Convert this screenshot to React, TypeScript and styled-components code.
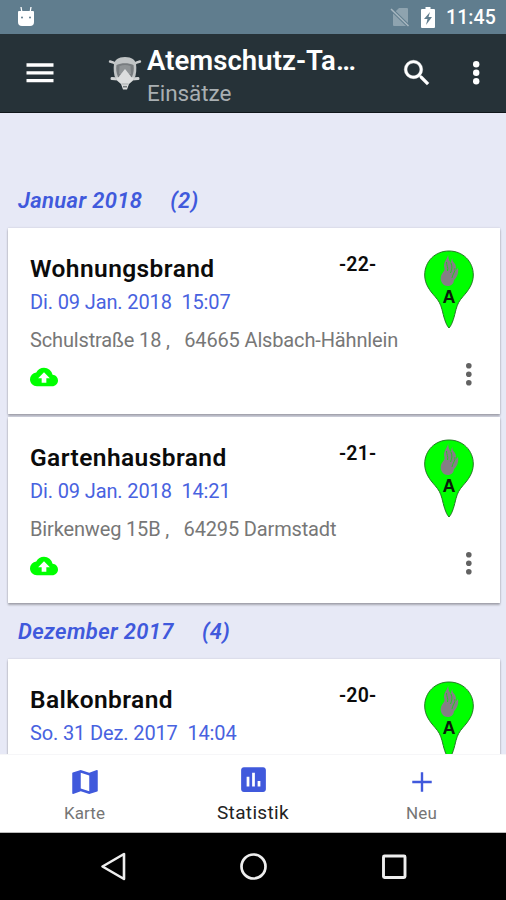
import React from "react";
import styled, { createGlobalStyle } from "styled-components";

const GlobalStyle = createGlobalStyle`
  * { box-sizing: border-box; }
  body { margin: 0; background: #000; font-family: Roboto, "Liberation Sans", sans-serif; }
  svg { display: block; flex: none; }
`;

const Screen = styled.div`
  width: 506px;
  height: 900px;
  display: flex;
  flex-direction: column;
  overflow: hidden;
`;

const StatusBar = styled.header`
  height: 34px;
  flex: none;
  display: flex;
  align-items: center;
  padding: 0 11px 0 17px;
  background: #607d8e;
  color: #fff;
`;

const StatusIcons = styled.div`
  margin-left: auto;
  display: flex;
  align-items: center;
  gap: 11px;
`;

const Clock = styled.span`
  width: 49px;
  font-size: 19.5px;
  font-weight: 500;
  line-height: 24px;
  letter-spacing: 0.1px;
  white-space: nowrap;
  padding-top: 2px;
`;

const AppBar = styled.div`
  height: 79px;
  flex: none;
  display: flex;
  align-items: flex-start;
  background: #263238;
  border-bottom: 1px solid #10171b;
  color: #fff;
  padding: 0 26px 0 24px;
`;

const MenuIcon = styled.svg`
  margin: 28px 55px 0 2px;
`;

const MaskIcon = styled.svg`
  margin: 20px 5px 0 -1px;
`;

const Titles = styled.div`
  width: 212px;
  padding-top: 11px;
`;

const Title = styled.h1`
  margin: 0;
  font-size: 27.5px;
  font-weight: 600;
  line-height: 32px;
  letter-spacing: 0.05px;
  white-space: nowrap;
`;

const Subtitle = styled.div`
  font-size: 22.5px;
  line-height: 33px;
  letter-spacing: -0.05px;
  color: #a9afb2;
`;

const BarActions = styled.div`
  display: flex;
  align-items: center;
  margin: 22px 0 0 auto;
  gap: 39.5px;
`;

const List = styled.main`
  flex: 1;
  min-height: 0;
  overflow: hidden;
  padding: 59px 6px 0 8px;
  background: #e7e9f6;
`;

const MonthHeader = styled.h2`
  margin: 0;
  height: 56px;
  padding: 17px 0 0 10px;
  display: flex;
  gap: 28px;
  font-size: 22px;
  line-height: 24px;
  font-weight: 600;
  font-style: italic;
  letter-spacing: 0.35px;
  color: #4059dc;
`;

const Card = styled.article`
  height: 186px;
  margin-bottom: 3px;
  display: flex;
  justify-content: space-between;
  padding: 0 22px;
  background: #fff;
  box-shadow: 0 2px 2px rgba(0, 0, 0, 0.28), 0 0 2px rgba(0, 0, 0, 0.14);
`;

const CardGroup = styled.section`
  & > article:last-child { margin-bottom: 0; }
`;

const Details = styled.div`
  width: 300px;
  padding-top: 27px;
  white-space: pre;
`;

const Name = styled.h3`
  margin: 0 0 7px;
  font-size: 24.5px;
  font-weight: 600;
  line-height: 28px;
  letter-spacing: 0.42px;
  color: #0b0b0b;
`;

const DateLine = styled.div`
  margin-bottom: 14px;
  font-size: 20px;
  line-height: 24px;
  letter-spacing: -0.13px;
  color: #4862e0;
`;

const Address = styled.div`
  margin-bottom: 11px;
  font-size: 20px;
  line-height: 24px;
  letter-spacing: -0.15px;
  color: #777;
`;

const EntryNumber = styled.div`
  width: 60px;
  margin-left: -16px;
  padding-top: 25px;
  font-size: 19.5px;
  font-weight: 600;
  line-height: 24px;
  letter-spacing: 0.2px;
  color: #0b0b0b;
`;

const Side = styled.div`
  width: 54px;
  padding-top: 22px;
  display: flex;
  flex-direction: column;
`;

const RowMore = styled.svg`
  margin: 34px 0 0 42px;
`;

const BottomNav = styled.nav`
  height: 79px;
  flex: none;
  display: grid;
  grid-template-columns: 169px 168px 169px;
  background: #fff;
  border-top: 1px solid #f6f6f8;
  border-bottom: 1px solid #bbb;
`;

const NavItem = styled.div<{ $active?: boolean }>`
  display: flex;
  flex-direction: column;
  align-items: center;
  padding-top: ${(p) => (p.$active ? 8 : 11)}px;
  gap: ${(p) => (p.$active ? 6 : 4)}px;
  font-size: ${(p) => (p.$active ? 19 : 17)}px;
  line-height: 22px;
  letter-spacing: ${(p) => (p.$active ? 0.35 : 0.1)}px;
  color: ${(p) => (p.$active ? "#222" : "#757575")};
`;

const SystemNav = styled.footer`
  height: 67px;
  flex: none;
  display: flex;
  justify-content: center;
  gap: 112px;
  padding: 19px 0 0 1px;
  background: #000;
`;

const Dots = ({ r, gap, color }: { r: number; gap: number; color: string }) => (
  <>
    {[0, 1, 2].map((i) => (
      <circle key={i} cx={r} cy={r + i * gap} r={r} fill={color} />
    ))}
  </>
);

const Mask = () => (
  <MaskIcon width="34" height="38" viewBox="0 0 34 38">
    <path d="M2 7.500l3.500 1L9 11M32 7.500l-3.500 1L25 11" stroke="#c8cbcc" strokeWidth="2.400" fill="none" strokeLinecap="round" />
    <path d="M4 24.500l6 .5M30 24.500l-6 .5" stroke="#d0d3d4" strokeWidth="3" fill="none" strokeLinecap="round" />
    <path d="M17 3C10 3 6.800 6 6 10c-.7 5-.3 10 1.500 15l5 3h9l5-3c1.800-5 2.200-10 1.500-15C27.200 6 24 3 17 3z" fill="#c0c4c5" />
    <path d="M8.500 11c5-2.500 12-2.500 17 0 .7 4 .2 8-1.500 12H10c-1.700-4-2.200-8-1.500-12z" fill="#777c7f" />
    <path d="M11.500 12c4-1.200 7-1.200 11 0l.5 8H11z" fill="#8f9496" />
    <path d="M17 15l6 7.500V26H11v-3.500z" fill="#dcdede" />
    <path d="M8 23.500h18l-1.500 3.500L21 30l-2 5.500h-4L13 30l-3.500-3z" fill="#dcdede" />
    <path d="M13.500 30h7" stroke="#a4a8aa" strokeWidth="1" fill="none" />
    <path d="M15 32.700h4" stroke="#747a7d" strokeWidth="1.600" />
  </MaskIcon>
);

const Pin = () => (
  <svg width="50" height="79" viewBox="0 0 50 79">
    <path
      d="M25 1C11 1 .7 11.500.7 25c0 9 5 15.500 10.300 21.500C15 51 16.500 54 18 59.500c1.500 6 3.500 15 7 18.500 3.500-3.500 5.500-12.500 7-18.500C33.500 54 35 51 39 46.500 44.300 40.500 49.300 34 49.300 25 49.300 11.500 39 1 25 1z"
      fill="#00ff00"
      stroke="#267826"
      strokeWidth="1"
    />
    <path
      d="M24.300 4c-.8 4.500-4 7-4.300 11.500-.1 1.500 1 3 .3 5-1.500 2.500-3.600 4-3.600 7.500 0 4.500 3 8 7 8 4 0 6-2.500 6.300-6 3-2.500 5.300-8 3.800-12.500-.3 1.500-1 2-1.800 2.300.3-4-.6-6-3-8.300-.7-1.300-.7-2-.3-3.500-1.700 1.800-2 3.500-1.200 6-2.200-3-3.600-5.500-3.200-10z"
      fill="#857f85"
    />
    <path d="M22.500 12c0 4 2 5 1 9M27 13c1.500 4 1 6-.5 10M31 18c.5 4-2.500 6-3 10" stroke="#20cc20" strokeWidth="1" fill="none" />
    <text x="25" y="53" textAnchor="middle" fontFamily="Liberation Sans, sans-serif" fontWeight="700" fontSize="18" fill="#0a1c0a">
      A
    </text>
  </svg>
);

interface Entry {
  name: string;
  date: string;
  address: string;
  number: number;
}

const months: { label: string; count: number; entries: Entry[] }[] = [
  {
    label: "Januar 2018",
    count: 2,
    entries: [
      { name: "Wohnungsbrand", date: "Di. 09 Jan. 2018  15:07", address: "Schulstraße 18 ,   64665 Alsbach-Hähnlein", number: 22 },
      { name: "Gartenhausbrand", date: "Di. 09 Jan. 2018  14:21", address: "Birkenweg 15B ,   64295 Darmstadt", number: 21 },
    ],
  },
  {
    label: "Dezember 2017",
    count: 4,
    entries: [{ name: "Balkonbrand", date: "So. 31 Dez. 2017  14:04", address: "", number: 20 }],
  },
];

const EntryCard = ({ entry }: { entry: Entry }) => (
  <Card>
    <Details>
      <Name>{entry.name}</Name>
      <DateLine>{entry.date}</DateLine>
      <Address>{entry.address}</Address>
      <svg width="28" height="28" viewBox="0 0 24 24" fill="#00ff00">
        <path d="M19.350 10.040A7.490 7.490 0 0 0 12 4C9.110 4 6.600 5.640 5.350 8.040A5.994 5.994 0 0 0 0 14c0 3.310 2.690 6 6 6h13c2.760 0 5-2.240 5-5 0-2.640-2.050-4.780-4.650-4.960zM14 13v4h-4v-4H7l5-5 5 5h-3z" />
      </svg>
    </Details>
    <EntryNumber>-{entry.number}-</EntryNumber>
    <Side>
      <Pin />
      <RowMore width="6" height="23" viewBox="0 0 6 23">
        <Dots r={2.8} gap={8.500} color="#626262" />
      </RowMore>
    </Side>
  </Card>
);

export default function App() {
  return (
    <Screen>
      <GlobalStyle />
      <StatusBar>
        <svg width="18" height="20" viewBox="0 0 18 20" fill="#fff">
          <path d="M4 0l1 6M14 0l-1 6" stroke="#fff" strokeWidth="1.300" />
          <path d="M2 4h14q1 0 1 1v10q0 4-4 4H5q-4 0-4-4V5q0-1 1-1z" />
          <circle cx="5" cy="10.500" r="1" fill="#607d8e" />
          <circle cx="13" cy="10.500" r="1" fill="#607d8e" />
        </svg>
        <StatusIcons>
          <svg width="20" height="20" viewBox="0 0 20 20">
            <path d="M9 1h8q1 0 1 1v16q0 1-1 1H4q-1 0-1-1V7z" fill="#8ea3af" />
            <path d="M1.500 2.500l16.500 16" stroke="#607d8e" strokeWidth="3.500" />
            <path d="M1 2l17.500 17" stroke="#a9b8c1" strokeWidth="1.500" />
          </svg>
          <svg width="14" height="21" viewBox="0 0 14 21">
            <path d="M4.500 0h5v2H13q1 0 1 1v17q0 1-1 1H1q-1 0-1-1V3q0-1 1-1h3.500z" fill="#fff" />
            <path d="M9 5l-6 7h3.500L5 18l6-8H7.500z" fill="#607d8e" />
          </svg>
          <Clock>11:45</Clock>
        </StatusIcons>
      </StatusBar>
      <AppBar>
        <MenuIcon width="28" height="22" viewBox="0 0 28 22">
          <path d="M0.500 3h27M0.500 10.800h27M0.500 18.600h27" stroke="#fff" strokeWidth="3.300" />
        </MenuIcon>
        <Mask />
        <Titles>
          <Title>Atemschutz-Ta…</Title>
          <Subtitle>Einsätze</Subtitle>
        </Titles>
        <BarActions>
          <svg width="34" height="34" viewBox="0 0 24 24" fill="#fff" stroke="#fff" strokeWidth="0.300">
            <path d="M15.500 14h-.79l-.28-.27A6.471 6.471 0 0 0 16 9.500 6.500 6.500 0 1 0 9.500 16c1.610 0 3.090-.59 4.230-1.570l.27.28v.79l5 4.990L20.490 19l-4.990-5zm-6 0C7.010 14 5 11.990 5 9.500S7.010 5 9.500 5 14 7.010 14 9.500 11.990 14 9.500 14z" />
          </svg>
          <svg width="7" height="24" viewBox="0 0 7 24">
            <Dots r={3.200} gap={8.500} color="#fff" />
          </svg>
        </BarActions>
      </AppBar>
      <List>
        {months.map((month) => (
          <CardGroup key={month.label}>
            <MonthHeader>
              <span>{month.label}</span>
              <span>({month.count})</span>
            </MonthHeader>
            {month.entries.map((entry) => (
              <EntryCard key={entry.number} entry={entry} />
            ))}
          </CardGroup>
        ))}
      </List>
      <BottomNav>
        <NavItem>
          <svg width="34" height="32" viewBox="0 0 24 24" preserveAspectRatio="none" fill="#4059dc">
            <path d="M20.500 3l-.16.03L15 5.100 9 3 3.360 4.900c-.21.07-.36.25-.36.48V20.500c0 .28.22.5.5.5l.16-.03L9 18.900l6 2.100 5.640-1.900c.21-.07.36-.25.36-.48V3.500c0-.28-.22-.5-.5-.5zM15 19l-6-2.110V5l6 2.110V19z" />
          </svg>
          Karte
        </NavItem>
        <NavItem $active>
          <svg width="33" height="33" viewBox="0 0 24 24" fill="#4059dc">
            <path d="M19 3H5c-1.100 0-2 .9-2 2v14c0 1.100.9 2 2 2h14c1.100 0 2-.9 2-2V5c0-1.100-.9-2-2-2zM9 17H7v-7h2v7zm4 0h-2V7h2v10zm4 0h-2v-4h2v4z" />
          </svg>
          Statistik
        </NavItem>
        <NavItem>
          <svg width="32" height="32" viewBox="0 0 24 24" fill="#4059dc">
            <path d="M19.300 12.900h-6.400v6.400h-1.800v-6.400H4.700v-1.800h6.400V4.700h1.800v6.400h6.400z" />
          </svg>
          Neu
        </NavItem>
      </BottomNav>
      <SystemNav>
        <svg width="28" height="29" viewBox="0 0 28 29" fill="none" stroke="#eee" strokeWidth="2.600" strokeLinejoin="round">
          <path d="M24 2v25L2.500 14.500z" />
        </svg>
        <svg width="28" height="29" viewBox="0 0 28 29" fill="none" stroke="#eee" strokeWidth="2.700">
          <circle cx="13.500" cy="14.500" r="12" />
        </svg>
        <svg width="28" height="29" viewBox="0 0 28 29" fill="none" stroke="#eee" strokeWidth="2.900">
          <rect x="3.500" y="4" width="21.500" height="21.500" rx="1" />
        </svg>
      </SystemNav>
    </Screen>
  );
}
